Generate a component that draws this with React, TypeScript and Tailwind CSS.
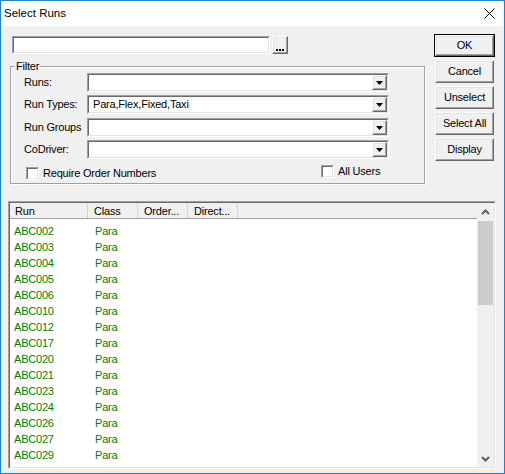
import React from 'react';

// classic 3D borders
const raisedOuter =
  'border border-t-white border-l-white border-r-[#696969] border-b-[#696969]';
const raisedInner =
  'border border-t-[#e3e3e3] border-l-[#e3e3e3] border-r-[#a0a0a0] border-b-[#a0a0a0]';
const sunkenOuter =
  'border border-t-[#a0a0a0] border-l-[#a0a0a0] border-r-white border-b-white';
const sunkenInner =
  'border border-t-[#696969] border-l-[#696969] border-r-[#e3e3e3] border-b-[#e3e3e3]';

const runs = [
  'ABC002',
  'ABC003',
  'ABC004',
  'ABC005',
  'ABC006',
  'ABC010',
  'ABC012',
  'ABC017',
  'ABC020',
  'ABC021',
  'ABC023',
  'ABC024',
  'ABC026',
  'ABC027',
  'ABC029',
  'ABC031',
];

const Button = ({ label, isDefault }: { label: string; isDefault?: boolean }) => {
  if (isDefault) {
    return (
      <div className="h-[23px] w-[61px] border border-black">
        <div className={`${raisedOuter} h-full w-full`}>
          <div className={`${raisedInner} flex h-full w-full items-center justify-center`}>
            {label}
          </div>
        </div>
      </div>
    );
  }
  return (
    <div className={`${raisedOuter} ml-[1px] h-[23px] w-[59px]`}>
      <div className={`${raisedInner} flex h-full w-full items-center justify-center`}>
        {label}
      </div>
    </div>
  );
};

const Combo = ({ value }: { value?: string }) => (
  <div className={`${sunkenOuter} h-[19px] w-[302px]`}>
    <div className={`${sunkenInner} flex h-full w-full bg-white`}>
      <div className="flex-1 pl-[4px] leading-[15px]">{value}</div>
      <div className={`${raisedOuter} h-full w-[15px] bg-[#f0f0f0]`}>
        <div className={`${raisedInner} flex h-full w-full items-center justify-center`}>
          <svg width="7" height="4" viewBox="0 0 7 4">
            <path d="M0 0h7L3.5 4z" fill="#000" />
          </svg>
        </div>
      </div>
    </div>
  </div>
);

const Checkbox = ({ label }: { label: string }) => (
  <div className="flex items-center">
    <div className={`${sunkenOuter} h-[13px] w-[13px]`}>
      <div className={`${sunkenInner} h-full w-full bg-white`}></div>
    </div>
    <span className="ml-[4px] leading-[13px]">{label}</span>
  </div>
);

const App = () => {
  return (
    <div className="h-[474px] w-[505px] border border-[#1883d7] font-['Liberation_Sans',Arial,sans-serif] text-[11px] tracking-[-0.2px] text-black flex flex-col overflow-hidden">
      {/* TITLE BAR */}
      <div className="flex h-[25px] items-center justify-between bg-white pl-[3px] pr-[9px]">
        <span className="text-[11.5px] tracking-normal">Select Runs</span>
        <svg width="11" height="11" viewBox="0 0 11 11">
          <path d="M0.5 0.5L10.5 10.5M10.5 0.5L0.5 10.5" stroke="#000" strokeWidth="1" />
        </svg>
      </div>

      {/* BODY */}
      <div className="flex flex-1 flex-col bg-[#f0f0f0] px-[7px] pt-[8px]">
        <div className="ml-[2px] flex">
          {/* LEFT */}
          <div className="w-[415px] pt-[2px]">
            <div className="ml-[2px] flex gap-[2px]">
              <div className={`${sunkenOuter} h-[18px] w-[258px]`}>
                <div className={`${sunkenInner} h-full w-full bg-white`}></div>
              </div>
              <div className={`${raisedOuter} h-[18px] w-[16px]`}>
                <div className={`${raisedInner} flex h-full w-full items-end justify-center gap-[1px] pb-[1px]`}>
                  <span className="h-[2px] w-[2px] bg-black"></span>
                  <span className="h-[2px] w-[2px] bg-black"></span>
                  <span className="h-[2px] w-[2px] bg-black"></span>
                </div>
              </div>
            </div>

            {/* FILTER GROUP */}
            <div className="relative mt-[7px] pt-[5px]">
              <span className="absolute left-[5px] top-0 bg-[#f0f0f0] px-[1px] leading-[11px]">
                Filter
              </span>
              <div className="h-[118px] border border-[#a0a0a0] pl-[13px] pt-[6px] shadow-[inset_1px_1px_0_#fff,1px_1px_0_#fff]">
                <div className="flex items-center">
                  <span className="w-[63px]">Runs:</span>
                  <Combo />
                </div>
                <div className="mt-[3px] flex items-center">
                  <span className="w-[63px]">Run Types:</span>
                  <Combo value="Para,Flex,Fixed,Taxi" />
                </div>
                <div className="mt-[4px] flex items-center">
                  <span className="w-[63px]">Run Groups</span>
                  <Combo />
                </div>
                <div className="mt-[3px] flex items-center">
                  <span className="w-[63px]">CoDriver:</span>
                  <Combo />
                </div>
                <div className="mt-[6px] flex items-start">
                  <div className="ml-[2px] mt-[2px] w-[295px]">
                    <Checkbox label="Require Order Numbers" />
                  </div>
                  <Checkbox label="All Users" />
                </div>
              </div>
            </div>
          </div>

          {/* RIGHT BUTTONS */}
          <div className="ml-[9px] flex flex-col gap-[3px]">
            <Button label="OK" isDefault />
            <Button label="Cancel" />
            <Button label="Unselect" />
            <Button label="Select All" />
            <Button label="Display" />
          </div>
        </div>

        {/* LIST VIEW */}
        <div className={`${sunkenOuter} mt-[17px] h-[268px] w-[488px]`}>
          <div className={`${sunkenInner} flex h-full w-full bg-white`}>
            <div className="flex flex-1 flex-col overflow-hidden">
              <div className="flex h-[16px] border-b border-[#a0a0a0] bg-[#f0f0f0] leading-[16px]">
                <div className="w-[78px] border-r border-[#d5d5d5] pl-[5px]">Run</div>
                <div className="w-[50px] border-r border-[#d5d5d5] pl-[6px]">Class</div>
                <div className="w-[50px] border-r border-[#d5d5d5] pl-[6px]">Order...</div>
                <div className="w-[50px] border-r border-[#d5d5d5] pl-[6px]">Direct...</div>
              </div>
              <div className="flex flex-col pt-[4px] text-[#008000]">
                {runs.map((run) => (
                  <div key={run} className="flex h-[16px] shrink-0 items-center pl-[4px]">
                    <span className="w-[81px]">{run}</span>
                    <span>Para</span>
                  </div>
                ))}
              </div>
            </div>

            {/* SCROLLBAR */}
            <div className="flex w-[17px] flex-col bg-[#f0f0f0]">
              <div className="flex h-[17px] items-center justify-center">
                <svg width="9" height="6" viewBox="0 0 9 6">
                  <path d="M1 5L4.5 1.5L8 5" stroke="#606060" strokeWidth="2" fill="none" />
                </svg>
              </div>
              <div className="mx-[1px] mt-[1px] h-[84px] bg-[#cdcdcd]"></div>
              <div className="flex-1"></div>
              <div className="flex h-[17px] items-center justify-center">
                <svg width="9" height="6" viewBox="0 0 9 6">
                  <path d="M1 1L4.5 4.5L8 1" stroke="#606060" strokeWidth="2" fill="none" />
                </svg>
              </div>
            </div>
          </div>
        </div>
      </div>
    </div>
  );
};

export default App;
